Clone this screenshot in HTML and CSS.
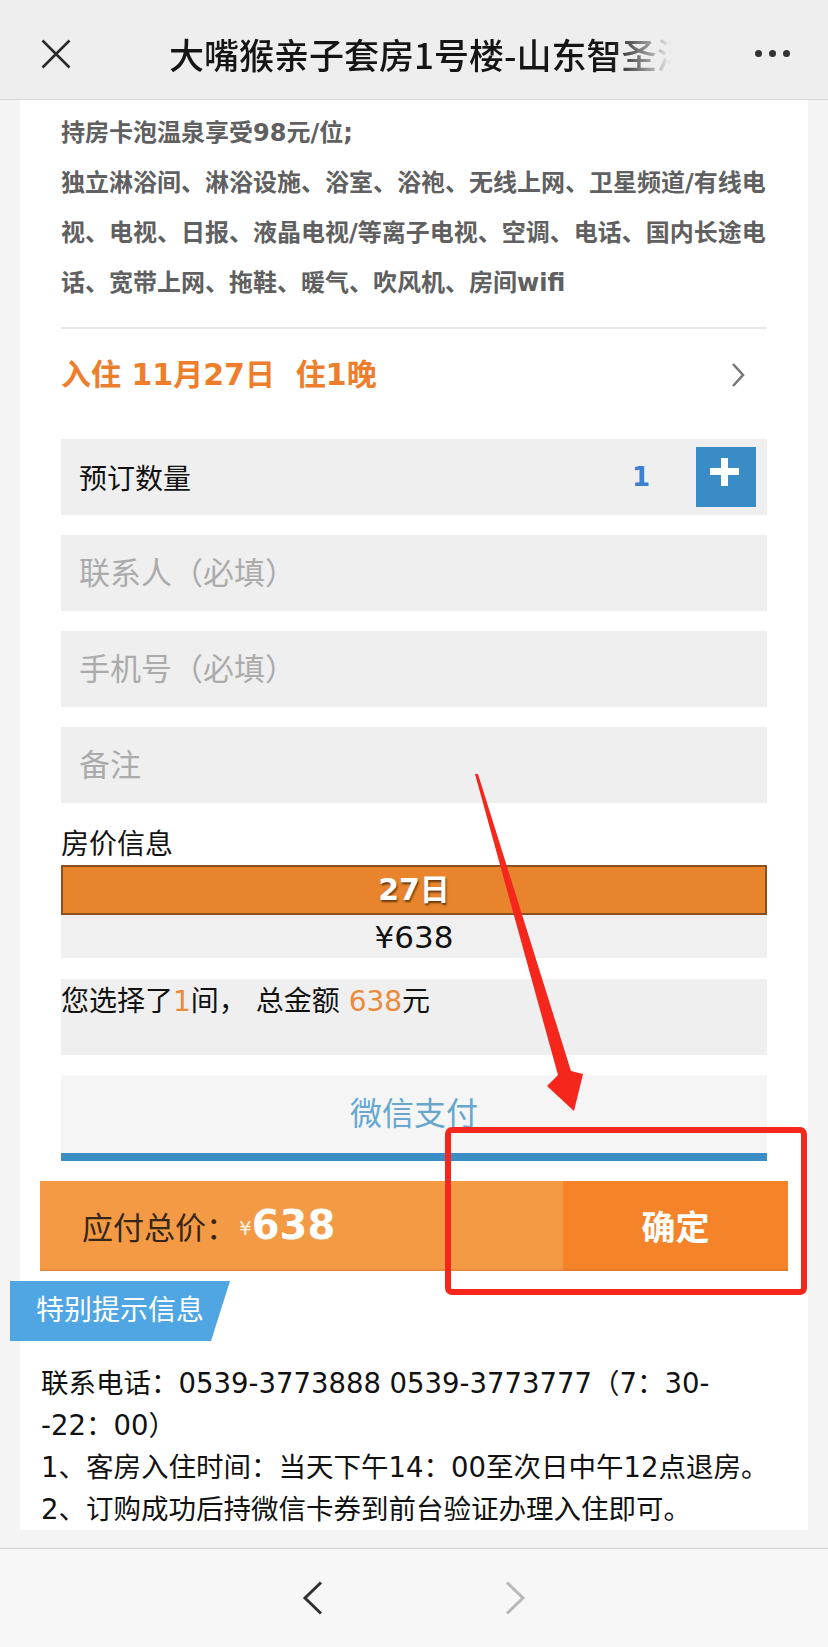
FILE: index.html
```html
<!DOCTYPE html>
<html lang="zh-CN">
<head>
<meta charset="utf-8">
<title>大嘴猴亲子套房1号楼</title>
<link rel="stylesheet" href="styles.css">
</head>
<body>
<header class="topbar">
  <div class="close-btn">
    <svg width="30" height="30" viewBox="0 0 30 30"><path d="M1.5 1.5 L28.5 28.5 M28.5 1.5 L1.5 28.5" stroke="#2b2b2b" stroke-width="2.6" fill="none"/></svg>
  </div>
  <div class="title">大嘴猴亲子套房1号楼-山东智圣汤泉</div>
  <div class="more"><span></span><span></span><span></span></div>
</header>

<main class="page">
  <section class="panel">
    <div class="desc">
      <p>持房卡泡温泉享受98元/位;</p>
      <p>独立淋浴间、淋浴设施、浴室、浴袍、无线上网、卫星频道/有线电视、电视、日报、液晶电视/等离子电视、空调、电话、国内长途电话、宽带上网、拖鞋、暖气、吹风机、房间wifi</p>
    </div>
    <div class="divider"></div>

    <div class="checkin">
      <span>入住 11月27日&nbsp; 住1晚</span>
      <svg class="chev" width="16" height="26" viewBox="0 0 16 26"><polyline points="3,2 13,13 3,24" fill="none" stroke="#777" stroke-width="2.6"/></svg>
    </div>

    <div class="field qty">
      <span class="qty-label">预订数量</span>
      <span class="qty-num">1</span>
      <span class="plus-btn"><svg width="60" height="60" viewBox="0 0 60 60"><path d="M14 21h29v7H14z M25 11h7v28h-7z" fill="#fff"/></svg></span>
    </div>
    <input class="field input" type="text" placeholder="联系人（必填）">
    <input class="field input" type="text" placeholder="手机号（必填）">
    <input class="field input" type="text" placeholder="备注">

    <div class="price-title">房价信息</div>
    <div class="date-bar">27日</div>
    <div class="price-row">¥638</div>

    <div class="summary">您选择了<span class="hl">1</span>间， 总金额 <span class="hl">638</span>元</div>

    <div class="wxpay">微信支付</div>

    <div class="paybar">
      <div class="total">
        <span class="total-label">应付总价：</span><span class="yen">¥</span><span class="amount">638</span>
      </div>
      <div class="confirm">确定</div>
    </div>

    <div class="tag">特别提示信息</div>
    <div class="tips">
      <p>联系电话：0539-3773888 0539-3773777（7：30-<br>-22：00）</p>
      <p>1、客房入住时间：当天下午14：00至次日中午12点退房。</p>
      <p>2、订购成功后持微信卡券到前台验证办理入住即可。</p>
    </div>
  </section>
</main>

<footer class="navbar">
  <svg width="22" height="34" viewBox="0 0 22 34"><polyline points="19,1.5 3,17 19,32.5" fill="none" stroke="#303030" stroke-width="3"/></svg>
  <svg width="22" height="34" viewBox="0 0 22 34"><polyline points="3,1.5 19,17 3,32.5" fill="none" stroke="#b8b8b8" stroke-width="3"/></svg>
</footer>

<svg class="annot" width="828" height="1647" viewBox="0 0 828 1647">
  <polygon points="475,774 478,774 571,1071 583,1074 574,1111 547,1086 558,1075" fill="#f5261b"/>
  <rect x="448" y="1130" width="356" height="162" rx="4" ry="4" fill="none" stroke="#f5261b" stroke-width="6"/>
</svg>
</body>
</html>
```

FILE: styles.css
```css
* { box-sizing: border-box; }

html, body {
  margin: 0;
  padding: 0;
}

body {
  position: relative;
  width: 828px;
  background: #f3f3f3;
  font-family: "DejaVu Sans", "Noto Sans CJK SC", sans-serif;
  color: #111;
}

p { margin: 0; }

/* ---------- top bar ---------- */
.topbar {
  display: flex;
  align-items: center;
  height: 100px;
  padding-top: 8px;
  background: #eeeeee;
  border-bottom: 1px solid #d6d6d6;
}

.close-btn {
  margin-left: 41px;
  width: 30px;
  height: 30px;
}
.close-btn svg { display: block; }

.title {
  margin-left: 98px;
  width: 503px;
  font-family: "Noto Sans CJK SC", sans-serif;
  font-size: 35px;
  line-height: 44px;
  font-weight: 500;
  color: #151515;
  white-space: nowrap;
  overflow: hidden;
  -webkit-mask-image: linear-gradient(90deg, #000 88%, transparent 100%);
  mask-image: linear-gradient(90deg, #000 88%, transparent 100%);
}

.more {
  margin-left: auto;
  margin-right: 38px;
  display: flex;
  gap: 7px;
}
.more span {
  width: 7px;
  height: 7px;
  border-radius: 50%;
  background: #333;
}

/* ---------- page / panel ---------- */
.page {
  padding: 0 20px 18px;
  background: #f4f4f4;
}

.panel {
  background: #fff;
  padding: 8px 41px 0;
}

.desc {
  margin-right: -6px;
}
.desc p {
  font-size: 24px;
  line-height: 50px;
  font-weight: bold;
  color: #606060;
}

.divider {
  margin-top: 19px;
  height: 2px;
  background: #e8e8e8;
}

.checkin {
  height: 92px;
  display: flex;
  align-items: center;
  justify-content: space-between;
  font-size: 30px;
  line-height: 40px;
  font-weight: bold;
  color: #ee7e2c;
}
.checkin .chev {
  margin-right: 21px;
}

/* ---------- form rows ---------- */
.field {
  display: flex;
  align-items: center;
  width: 100%;
  height: 76px;
  margin: 20px 0 0;
  padding: 0 0 0 18px;
  background: #efefef;
  border: 0;
  outline: none;
  font-family: "DejaVu Sans", "Noto Sans CJK SC", sans-serif;
}

.qty {
  margin-top: 18px;
  padding-right: 11px;
  font-size: 28px;
  color: #111;
}
.qty-label { flex: 1; }
.qty-num {
  margin-right: 46px;
  font-size: 26px;
  font-weight: bold;
  color: #3a80d0;
}
.plus-btn {
  width: 60px;
  height: 60px;
  background: #3a8cc7;
}
.plus-btn svg { display: block; }

.input {
  font-size: 31px;
  color: #333;
}
.input::placeholder {
  color: #ababab;
}

/* ---------- price info ---------- */
.price-title {
  margin-top: 22px;
  font-size: 28px;
  line-height: 40px;
  color: #111;
}

.date-bar {
  height: 50px;
  border: 2px solid #8c4f1f;
  background: #e8852c;
  color: #fff;
  font-size: 30px;
  font-weight: bold;
  line-height: 46px;
  text-align: center;
  text-shadow: 1px 2px 2px #6a3810;
}

.price-row {
  height: 43px;
  background: #f0f0f0;
  text-align: center;
  font-size: 31px;
  line-height: 44px;
  color: #111;
}

.summary {
  margin-top: 21px;
  height: 76px;
  background: #efefef;
  font-size: 28px;
  line-height: 46px;
  color: #111;
}
.summary .hl { color: #ea8a3b; }

.wxpay {
  margin-top: 20px;
  height: 86px;
  background: #f5f5f5;
  border-bottom: 8px solid #3a8ec3;
  text-align: center;
  font-size: 32px;
  line-height: 78px;
  color: #67a6cf;
}

/* ---------- pay bar ---------- */
.paybar {
  display: flex;
  height: 90px;
  margin: 20px -21px 0;
}
.total {
  flex: 1;
  display: flex;
  align-items: center;
  padding-left: 42px;
  background: #f49a44;
  border-bottom: 2px solid #e38c3f;
}
.total-label {
  font-size: 31px;
  color: #35261a;
}
.yen {
  margin-left: 2px;
  font-size: 20px;
  color: #fff4e6;
  align-self: center;
  padding-top: 6px;
}
.amount {
  font-size: 40px;
  font-weight: bold;
  color: #fff;
}
.confirm {
  width: 225px;
  display: flex;
  align-items: center;
  justify-content: center;
  background: #f5832a;
  border-bottom: 2px solid #e27a2a;
  color: #fff;
  font-size: 34px;
  font-weight: bold;
}

/* ---------- tips ---------- */
.tag {
  width: 220px;
  height: 60px;
  margin: 10px 0 0 -51px;
  padding-left: 26px;
  background: #4fa6e2;
  clip-path: polygon(0 0, 100% 0, calc(100% - 19px) 100%, 0 100%);
  color: #fff;
  font-size: 28px;
  line-height: 60px;
}

.tips {
  margin: 21px -8px 0 -20px;
  font-size: 27.5px;
  line-height: 42px;
  color: #111;
}

/* ---------- bottom nav ---------- */
.navbar {
  display: flex;
  justify-content: center;
  align-items: center;
  gap: 180px;
  height: 99px;
  background: #f7f7f7;
  border-top: 1px solid #d4d4d4;
}
.navbar svg { display: block; }

/* ---------- annotation overlay ---------- */
.annot {
  position: absolute;
  left: 0;
  top: 0;
  pointer-events: none;
}
```
